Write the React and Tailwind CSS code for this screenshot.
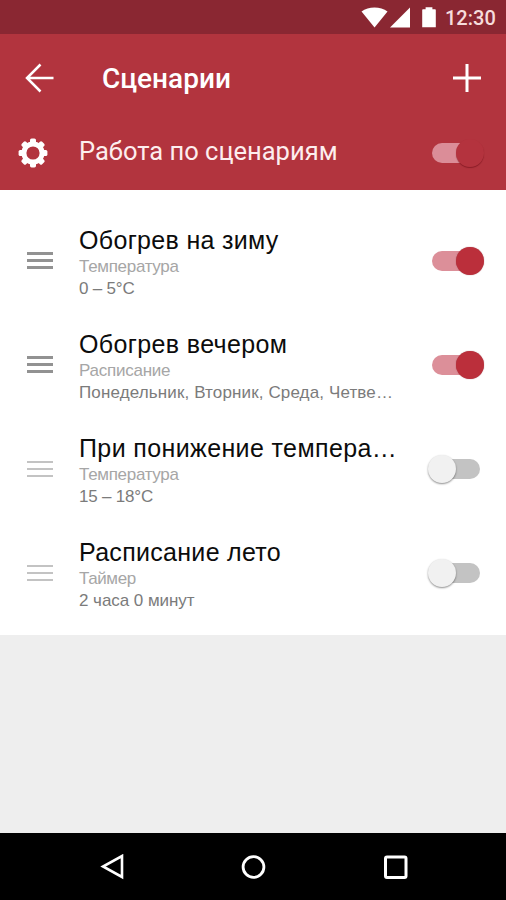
import React from "react";

function Toggle({ on, tinted }) {
  const track = on ? (tinted ? "bg-[#db8d98]" : "bg-[#dc8f99]") : "bg-[#c3c3c3]";
  const knob = on
    ? tinted
      ? "left-[28px] bg-[#b4333e] shadow-[0_1px_1px_rgba(90,0,10,0.45)]"
      : "left-[28px] bg-[#bb2f3b] shadow-[0_0_1px_rgba(120,20,30,0.7)]"
    : "left-0 bg-[#f1f1f1] shadow-[0_1px_2px_rgba(0,0,0,0.45)]";
  return (
    <div className="relative h-[28px] w-[56px] shrink-0">
      <div className={"absolute left-[4px] top-[4px] h-[20px] w-[48px] rounded-full " + track} />
      <div className={"absolute top-0 h-[28px] w-[28px] rounded-full " + knob} />
    </div>
  );
}

function Handle({ active }) {
  const bar = active ? "h-[3px] bg-[#929292]" : "h-[2px] bg-[#c3c3c3]";
  return (
    <div className={"flex w-[26px] shrink-0 flex-col " + (active ? "gap-[4px] pb-[2px]" : "gap-[5px]")}>
      <div className={bar} />
      <div className={bar} />
      <div className={bar} />
    </div>
  );
}

const scenarios = [
  { title: "Обогрев на зиму", kind: "Температура", detail: "0 – 5°C", on: true, ts: "tracking-[0.32px]", ks: "tracking-[-0.3px]", ds: "tracking-[-0.2px]" },
  { title: "Обогрев вечером", kind: "Расписание", detail: "Понедельник, Вторник, Среда, Четве…", on: true, ts: "tracking-[0.37px]", ks: "tracking-[-0.25px]", ds: "tracking-[0.13px]" },
  { title: "При понижение темпера…", kind: "Температура", detail: "15 – 18°C", on: false, ts: "tracking-[0.38px]", ks: "tracking-[-0.3px]", ds: "tracking-[-0.2px]" },
  { title: "Расписание лето", kind: "Таймер", detail: "2 часа 0 минут", on: false, ts: "tracking-[0.3px]", ks: "tracking-[-0.4px]", ds: "tracking-[-0.05px]" },
];

function ScenarioRow({ item }) {
  return (
    <div className="flex h-[104px] items-center pl-[27px] pr-[22px]">
      <Handle active={item.on} />
      <div className="ml-[26px] w-[330px] shrink-0 whitespace-nowrap pt-[4px]">
        <div className={"h-[29px] text-[25px] leading-[26px] text-[#0c0c0c] " + item.ts}>{item.title}</div>
        <div className={"h-[22px] text-[17px] leading-[22px] text-[#a6a6a6] " + item.ks}>{item.kind}</div>
        <div className={"h-[21px] text-[17px] leading-[22px] text-[#7b7b7b] " + item.ds}>{item.detail}</div>
      </div>
      <div className="ml-auto flex">
        <Toggle on={item.on} />
      </div>
    </div>
  );
}

export default function App() {
  return (
    <div className="flex h-[900px] w-[506px] flex-col overflow-hidden bg-[#eeeeee] font-['Liberation_Sans',Arial,sans-serif]">
      <div className="flex h-[34px] shrink-0 items-center bg-[#8a2732] pl-[361px] font-['Roboto',sans-serif]">
        <svg width="80" height="34" viewBox="0 0 80 34" fill="#fff">
          <path d="M0.5 11.5C7.5 6 19.5 6 26.5 11.5L13.5 27.5Z" />
          <path d="M49 7.5V27.5H29Z" />
          <path d="M62 9.2h2.6V7.2h6.8v2h2.6a.8.8 0 0 1 .8.8v17.3H61.2V10a.8.8 0 0 1 .8-.8Z" />
        </svg>
        <div className="ml-[4px] pt-px text-[20px] font-medium leading-[34px] text-[#f6dcdc]">12:30</div>
      </div>

      <div className="flex h-[156px] shrink-0 flex-col bg-[#b2343e] font-['Roboto',sans-serif] text-white">
        <div className="flex h-[88px] items-center pl-[25px] pr-[24px]">
          <svg width="30" height="30" viewBox="0 0 30 30" fill="none" stroke="#fff" strokeWidth="2.5">
            <path d="M28.5 15H2M15.5 1.5L2 15L15.5 28.5" />
          </svg>
          <div className="ml-[47px] pt-[2px] text-[28px] font-medium leading-[34px]">Сценарии</div>
          <svg className="ml-auto" width="30" height="30" viewBox="0 0 30 30" fill="none" stroke="#fff" strokeWidth="3">
            <path d="M15 1V29M1 15H29" />
          </svg>
        </div>
        <div className="flex h-[62px] items-center pl-[18px] pr-[22px]">
          <svg width="30" height="30" viewBox="-15 -15 30 30" fill="#fff">
            <path fillRule="evenodd" d="M0 -11.6A11.6 11.6 0 1 1 0 11.6A11.6 11.6 0 1 1 0 -11.6ZM0 -6.6A6.6 6.6 0 1 0 0 6.6A6.6 6.6 0 1 0 0 -6.6Z" />
            {[0, 45, 90, 135, 180, 225, 270, 315].map((a) => (
              <rect key={a} x="-3" y="-14.4" width="6" height="5" rx="1.6" transform={`rotate(${a})`} />
            ))}
          </svg>
          <div className="ml-[31px] pb-[4px] text-[25.5px] leading-[32px] text-[#fdeeee]">Работа по сценариям</div>
          <div className="ml-auto flex">
            <Toggle on tinted />
          </div>
        </div>
      </div>

      <div className="h-[445px] shrink-0 bg-white pt-[19px]">
        {scenarios.map((s) => (
          <ScenarioRow key={s.title} item={s} />
        ))}
      </div>

      <div className="h-[198px] shrink-0 bg-[#eeeeee]" />

      <div className="flex h-[67px] shrink-0 items-center bg-black">
        <svg className="ml-[100px]" width="26" height="26" viewBox="0 0 26 26" fill="none" stroke="#fff" strokeWidth="2.6">
          <path d="M22 2V23L3 12.5Z" />
        </svg>
        <svg className="ml-[114px]" width="26" height="26" viewBox="0 0 26 26" fill="none" stroke="#fff" strokeWidth="2.8">
          <circle cx="13.5" cy="13" r="10.4" />
        </svg>
        <svg className="ml-[116px]" width="26" height="26" viewBox="0 0 26 26" fill="none" stroke="#fff" strokeWidth="3">
          <rect x="3.5" y="3" width="20.5" height="20.5" rx="1.5" />
        </svg>
      </div>
    </div>
  );
}
